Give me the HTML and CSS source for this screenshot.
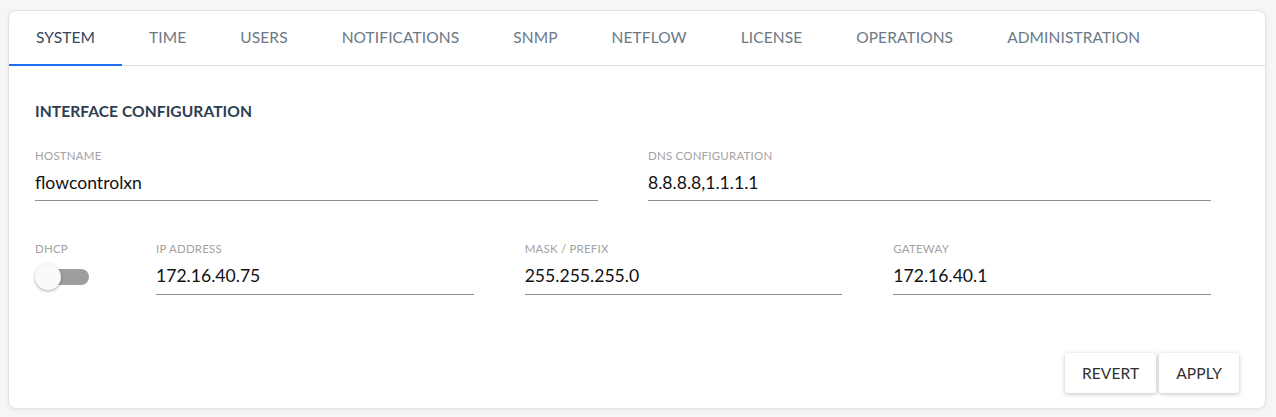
FILE: index.html
```html
<!DOCTYPE html>
<html>
<head>
<meta charset="utf-8">
<link rel="stylesheet" href="styles.css">
</head>
<body>
<div class="card">
  <nav class="tabs">
    <div class="tab active">SYSTEM</div>
    <div class="tab">TIME</div>
    <div class="tab">USERS</div>
    <div class="tab">NOTIFICATIONS</div>
    <div class="tab">SNMP</div>
    <div class="tab">NETFLOW</div>
    <div class="tab">LICENSE</div>
    <div class="tab">OPERATIONS</div>
    <div class="tab">ADMINISTRATION</div>
  </nav>
  <div class="content">
    <h2 class="heading">INTERFACE CONFIGURATION</h2>
    <div class="row-two">
      <div class="field">
        <div class="label">HOSTNAME</div>
        <div class="value">flowcontrolxn</div>
      </div>
      <div class="field">
        <div class="label">DNS CONFIGURATION</div>
        <div class="value">8.8.8.8,1.1.1.1</div>
      </div>
    </div>
    <div class="row-four">
      <div class="dhcp">
        <div class="label">DHCP</div>
        <div class="toggle"><span class="track"></span><span class="thumb"></span></div>
      </div>
      <div class="field">
        <div class="label">IP ADDRESS</div>
        <div class="value">172.16.40.75</div>
      </div>
      <div class="field">
        <div class="label">MASK / PREFIX</div>
        <div class="value">255.255.255.0</div>
      </div>
      <div class="field">
        <div class="label">GATEWAY</div>
        <div class="value">172.16.40.1</div>
      </div>
    </div>
  </div>
  <div class="actions">
    <button class="btn">REVERT</button>
    <button class="btn">APPLY</button>
  </div>
</div>
</body>
</html>
```
FILE: styles.css
```css
* { box-sizing: border-box; }
html, body { margin: 0; padding: 0; }
body {
  background: #f6f6f6;
  padding: 10px 10px 8px 8px;
  font-family: Lato, "Liberation Sans", sans-serif;
}
.card {
  background: #fff;
  border: 1px solid #e3e3e3;
  border-radius: 8px;
  box-shadow: 0 1px 4px rgba(0,0,0,0.06);
  height: 399px;
  display: flex;
  flex-direction: column;
}
.tabs {
  display: flex;
  border-bottom: 1px solid #e0e0e0;
  height: 55px;
}
.tab {
  padding: 0 27px;
  font-size: 15.5px;
  line-height: 52px;
  color: #6b7886;
  border-bottom: 2px solid transparent;
  height: 55px;
  margin-bottom: -1px;
  letter-spacing: 0.1px;
}
.tab.active {
  color: #34475c;
  border-bottom: 2px solid #1e6ff0;
}
.content {
  padding: 35px 54px 0 26px;
}
.heading {
  margin: 0;
  font-size: 15.6px;
  line-height: 20px;
  font-weight: 700;
  color: #2c3e50;
  letter-spacing: 0.05px;
}
.row-two {
  display: grid;
  grid-template-columns: 1fr 1fr;
  column-gap: 50px;
  margin-top: 28px;
}
.row-four {
  display: grid;
  grid-template-columns: 70px repeat(3, 1fr);
  column-gap: 51px;
  margin-top: 41px;
}
.label {
  font-size: 11.5px;
  line-height: 14px;
  color: #a3a3a3;
  letter-spacing: 0.2px;
}
.value {
  margin-top: 9px;
  font-size: 17.6px;
  line-height: 22px;
  color: #111;
  padding-bottom: 6px;
  border-bottom: 1px solid #8f8f8f;
}
.row-four .value {
  padding-bottom: 7px;
}
.toggle {
  position: relative;
  width: 56px;
  height: 28px;
  margin-top: 7px;
}
.track {
  position: absolute;
  left: 2px;
  top: 6px;
  width: 52px;
  height: 16px;
  border-radius: 8px;
  background: #9e9e9e;
}
.thumb {
  position: absolute;
  left: 0;
  top: 1px;
  width: 26px;
  height: 26px;
  border-radius: 50%;
  background: #fafafa;
  box-shadow: 0 1px 3px rgba(0,0,0,0.35);
}
.actions {
  margin-top: auto;
  display: flex;
  justify-content: flex-end;
  gap: 3px;
  padding: 0 26px 15px 0;
}
.btn {
  font-family: Lato, "Liberation Sans", sans-serif;
  font-size: 15.5px;
  line-height: 38px;
  color: #2f2f2f;
  background: #fff;
  border: none;
  border-radius: 3px;
  height: 40px;
  padding: 0 17px;
  box-shadow: 0 1px 4px rgba(0,0,0,0.25);
  letter-spacing: 0.1px;
}
```
